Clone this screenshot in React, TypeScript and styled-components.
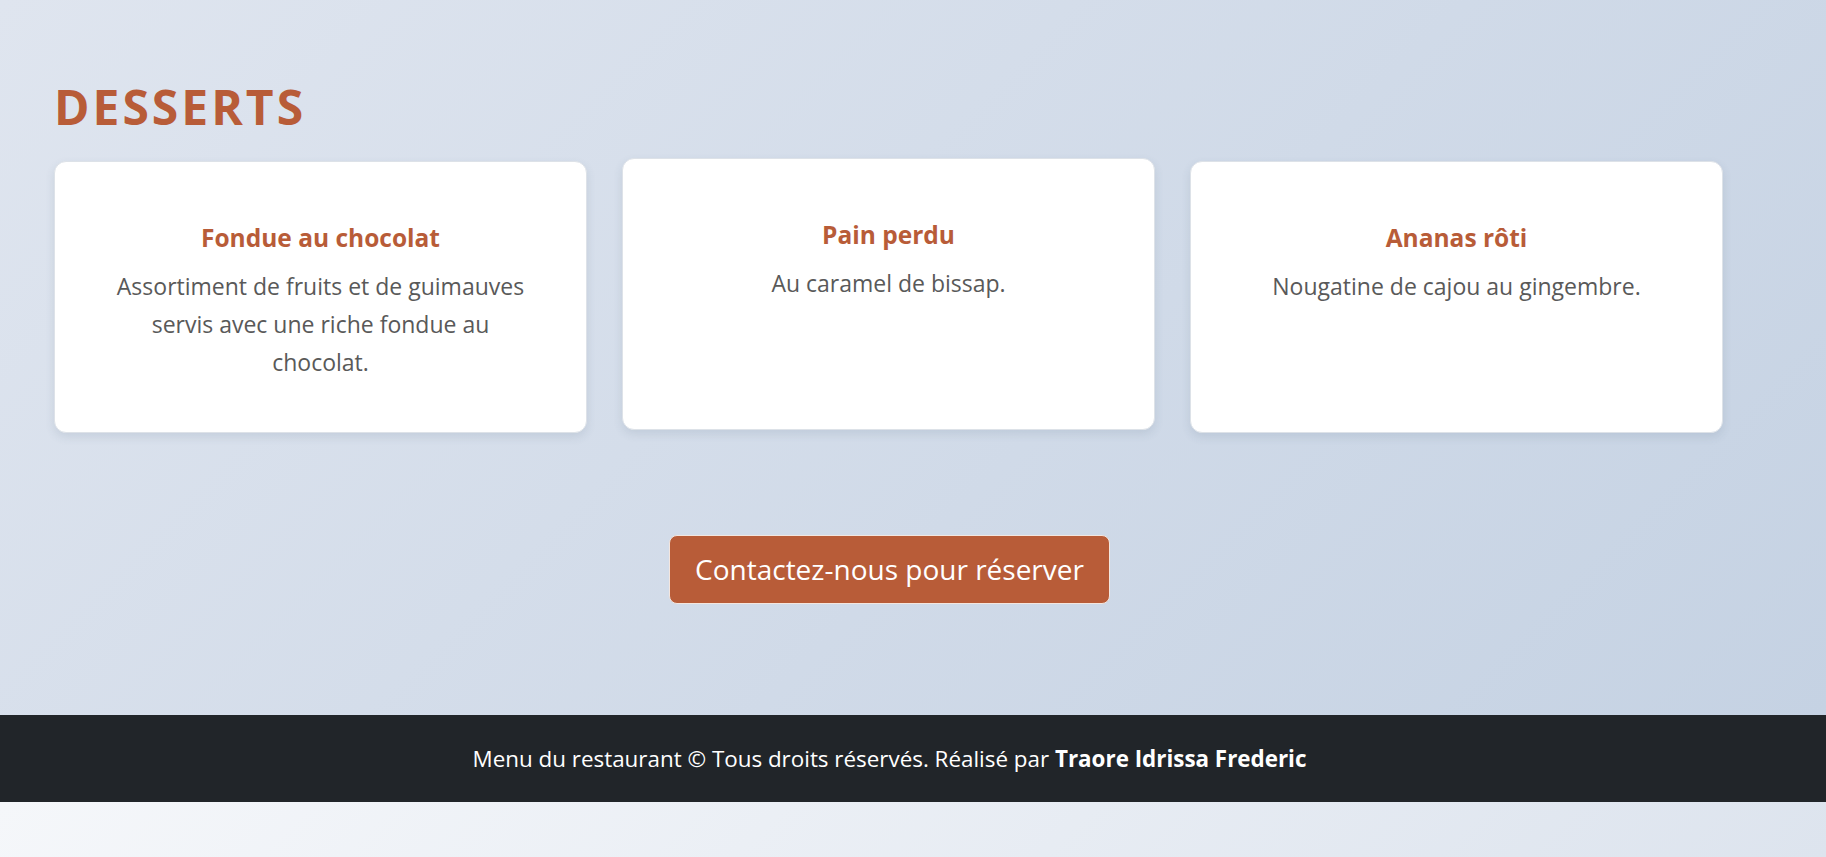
import styled, { createGlobalStyle } from 'styled-components';

const GlobalStyle = createGlobalStyle`
  html, body {
    margin: 0;
    padding: 0;
  }
  body {
    font-family: 'Segoe UI', 'Open Sans', 'Noto Sans', sans-serif;
    background: #f5f7fa;
  }
`;

const accent = '#b85c38';

const Page = styled.div`
  display: flex;
  flex-direction: column;
  min-height: 857px;
`;

const Main = styled.main`
  background: linear-gradient(135deg, #dfe5ef 0%, #c5d2e3 100%);
  padding: 78px 0 0 54px;
  height: 715px;
  box-sizing: border-box;
`;

const Container = styled.div`
  width: 1671px;
`;

const SectionTitle = styled.h2`
  margin: 0 0 25px;
  font-size: 48px;
  line-height: 1.2;
  font-weight: 700;
  letter-spacing: 3px;
  text-transform: uppercase;
  color: ${accent};
`;

const Grid = styled.div`
  display: grid;
  grid-template-columns: repeat(3, 533px);
  column-gap: 35px;
  align-items: start;
`;

const Card = styled.div<{ $lifted?: boolean }>`
  height: 272px;
  box-sizing: border-box;
  background: #fff;
  border: 1px solid #dde2e8;
  border-radius: 12px;
  box-shadow: 0 4px 10px rgba(60, 80, 110, 0.12);
  padding: 61px 56px 30px;
  text-align: center;
  transform: ${({ $lifted }) => ($lifted ? 'translateY(-3px)' : 'none')};
`;

const CardTitle = styled.h5`
  margin: 0 0 15px;
  font-size: 24.5px;
  line-height: 1.2;
  font-weight: 700;
  color: ${accent};
`;

const CardText = styled.p`
  margin: 0;
  font-size: 23px;
  line-height: 38px;
  color: #595959;
`;

const Actions = styled.div`
  display: flex;
  justify-content: center;
  margin-top: 102px;
`;

const ReserveButton = styled.a`
  display: inline-block;
  box-sizing: border-box;
  height: 69px;
  padding: 11px 25px;
  border: 1px solid #f3e6df;
  border-radius: 8px;
  background: ${accent};
  color: #fff;
  font-size: 28px;
  line-height: 45px;
  text-decoration: none;
  cursor: pointer;
`;

const Footer = styled.footer`
  height: 87px;
  background: #212529;
  color: #fff;
  padding-left: 54px;
  display: flex;
  align-items: center;
`;

const FooterText = styled.p`
  width: 1671px;
  margin: 0;
  text-align: center;
  font-size: 22.4px;
  strong {
    font-weight: 700;
  }
`;

const BottomStrip = styled.div`
  flex: 1;
  background: linear-gradient(135deg, #f5f7fa 0%, #dde4ee 100%);
`;

const desserts = [
  {
    name: 'Fondue au chocolat',
    text: 'Assortiment de fruits et de guimauves servis avec une riche fondue au chocolat.',
  },
  { name: 'Pain perdu', text: 'Au caramel de bissap.', lifted: true },
  { name: 'Ananas rôti', text: 'Nougatine de cajou au gingembre.' },
];

export default function App() {
  return (
    <>
      <GlobalStyle />
      <Page>
        <Main>
          <Container>
            <SectionTitle>Desserts</SectionTitle>
            <Grid>
              {desserts.map((d) => (
                <Card key={d.name} $lifted={d.lifted}>
                  <CardTitle>{d.name}</CardTitle>
                  <CardText>{d.text}</CardText>
                </Card>
              ))}
            </Grid>
            <Actions>
              <ReserveButton>Contactez-nous pour réserver</ReserveButton>
            </Actions>
          </Container>
        </Main>
        <Footer>
          <FooterText>
            Menu du restaurant © Tous droits réservés. Réalisé par{' '}
            <strong>Traore Idrissa Frederic</strong>
          </FooterText>
        </Footer>
        <BottomStrip />
      </Page>
    </>
  );
}
